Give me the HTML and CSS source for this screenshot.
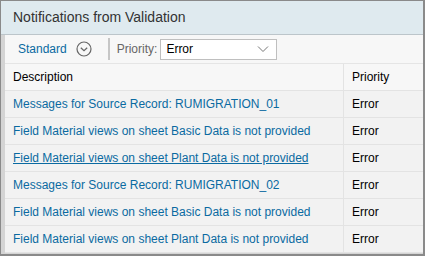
FILE: index.html
```html
<!doctype html>
<html>
  <head>
    <title>Notifications from Validation</title>
    <link rel="stylesheet" href="styles.css">
  </head>
  <body>
    <div class="dialog">
      <header class="title">Notifications from Validation</header>
      <div class="content">
        <div class="toolbar">
          <a class="variant" href="#">Standard</a>
          <svg class="variant-icon" width="16" height="16" viewBox="0 0 16 16">
            <circle cx="8" cy="8" r="7" fill="none" stroke="#666" stroke-width="1.2"/>
            <path d="M4.8 6.8 L8 9.8 L11.2 6.8" fill="none" stroke="#666" stroke-width="1.2"/>
          </svg>
          <span class="separator"></span>
          <label class="filter-label" for="priority">Priority:</label>
          <div class="select" id="priority">
            <span>Error</span>
            <svg width="12" height="8" viewBox="0 0 12 8">
              <path d="M1 1.5 L6 6.5 L11 1.5" fill="none" stroke="#777" stroke-width="1"/>
            </svg>
          </div>
        </div>
        <table class="messages">
          <thead>
            <tr>
              <th>Description</th>
              <th class="priority">Priority</th>
            </tr>
          </thead>
          <tbody>
            <tr>
              <td><a href="#">Messages for Source Record: RUMIGRATION_01</a></td>
              <td class="priority">Error</td>
            </tr>
            <tr>
              <td><a href="#">Field Material views on sheet Basic Data is not provided</a></td>
              <td class="priority">Error</td>
            </tr>
            <tr>
              <td><a href="#" class="focused">Field Material views on sheet Plant Data is not provided</a></td>
              <td class="priority">Error</td>
            </tr>
            <tr>
              <td><a href="#">Messages for Source Record: RUMIGRATION_02</a></td>
              <td class="priority">Error</td>
            </tr>
            <tr>
              <td><a href="#">Field Material views on sheet Basic Data is not provided</a></td>
              <td class="priority">Error</td>
            </tr>
            <tr>
              <td><a href="#">Field Material views on sheet Plant Data is not provided</a></td>
              <td class="priority">Error</td>
            </tr>
          </tbody>
        </table>
      </div>
    </div>
  </body>
</html>
```
FILE: styles.css
```css
html, body {
  margin: 0;
  padding: 0;
}

body {
  font-family: "Liberation Sans", Arial, sans-serif;
  font-size: 12px;
  color: #000;
}

.dialog {
  width: 425px;
  height: 256px;
  box-sizing: border-box;
  border: 1px solid #8a8a8a;
  border-right-width: 2px;
  border-bottom-width: 2px;
  background: #d4d4d4;
  overflow: hidden;
}

.title {
  height: 33px;
  line-height: 33px;
  padding-left: 12px;
  font-size: 14px;
  color: #333;
  background: #dfeaef;
  border-bottom: 1px solid #bcc5ca;
}

.content {
  margin-left: 4px;
  background: #f7f7f7;
}

.toolbar {
  display: flex;
  align-items: center;
  height: 28px;
  padding-left: 13px;
  background: #f7f7f7;
  border-bottom: 1px solid #e5e5e5;
}

.variant {
  color: #0a6aa1;
  text-decoration: none;
}

.variant-icon {
  margin-left: 9px;
}

.separator {
  width: 2px;
  height: 22px;
  margin: 0 7px 0 16px;
  background: #c6c6c6;
}

.filter-label {
  color: #666;
  margin-right: 3px;
}

.select {
  display: flex;
  align-items: center;
  justify-content: space-between;
  width: 103px;
  height: 19px;
  padding: 0 7px 0 5px;
  background: #fff;
  border: 1px solid #bfbfbf;
}

.messages {
  width: 100%;
  border-collapse: collapse;
}

.messages th,
.messages td {
  height: 26px;
  padding: 0 0 0 8px;
  text-align: left;
  font-weight: normal;
  border-bottom: 1px solid #e3e3e3;
}

.messages th {
  background: #f7f7f7;
}

.messages td {
  background: #f2f2f2;
}

.messages .priority {
  width: 71px;
  border-left: 1px solid #e3e3e3;
}

.messages a {
  color: #0a6aa1;
  text-decoration: none;
}

.messages a.focused {
  text-decoration: underline;
}
```
